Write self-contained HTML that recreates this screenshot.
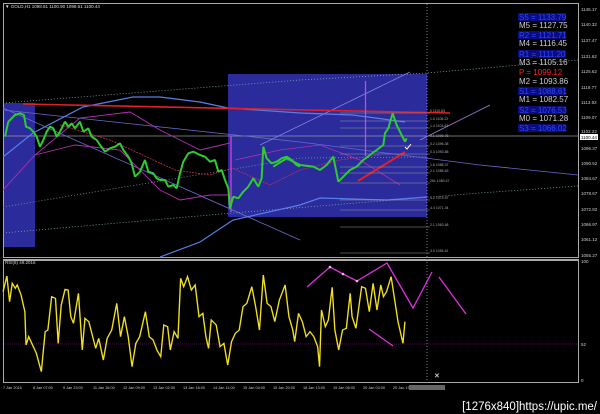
<!DOCTYPE html>
<html><head><meta charset="utf-8"><style>
html,body{margin:0;padding:0;background:#000;width:600px;height:414px;overflow:hidden}
svg{display:block}
text{font-family:"Liberation Sans",sans-serif}
</style></head><body>
<svg width="600" height="414" viewBox="0 0 600 414" xmlns="http://www.w3.org/2000/svg">
<rect width="600" height="414" fill="#000"/>
<rect x="3" y="103" width="32" height="144" fill="#2b2b9c"/>
<rect x="228" y="74" width="199" height="143" fill="#2b2b9c"/>
<rect x="3.5" y="3.5" width="575" height="254" fill="none" stroke="#aaa" stroke-width="1"/>
<line x1="3" y1="259.5" x2="579" y2="259.5" stroke="#aaa"/>
<rect x="3.5" y="260.5" width="575" height="122" fill="none" stroke="#aaa" stroke-width="1"/>
<line x1="427" y1="4" x2="427" y2="383" stroke="#888" stroke-dasharray="1,2"/>
<line x1="4" y1="136" x2="578" y2="136" stroke="#999" stroke-width="0.8"/>
<polyline points="3,103 300,80 427,73 578,60" fill="none" stroke="#7aa" stroke-width="0.8" stroke-dasharray="1,2"/>
<polyline points="3,233 233,213 480,193 578,186" fill="none" stroke="#7aa" stroke-width="0.8" stroke-dasharray="1,2"/>
<polyline points="3,207 300,158 427,157" fill="none" stroke="#88a" stroke-width="0.8" stroke-dasharray="1,2"/>
<line x1="3" y1="108" x2="300" y2="240" stroke="#6a6ad0" stroke-width="0.8"/>
<polyline points="3,110 300,142 480,165 578,175" fill="none" stroke="#6a6ad0" stroke-width="0.8"/>
<line x1="260" y1="145" x2="410" y2="72" stroke="#8080e0" stroke-width="0.8"/>
<line x1="420" y1="140" x2="490" y2="105" stroke="#a080e0" stroke-width="0.8"/>
<polyline points="3,157 33,133 83,107 133,97 160,97 200,102 228,108 300,113 353,115 405,122" fill="none" stroke="#5a7ee8" stroke-width="1.2"/>
<polyline points="160,257 200,242 233,220 300,205 320,198 387,200 427,197" fill="none" stroke="#5a7ee8" stroke-width="1.2"/>
<polyline points="3,190 35,155 80,118 130,112 160,130 200,150 230,143" fill="none" stroke="#b030b0" stroke-width="0.9"/>
<polyline points="35,155 75,145 120,150 160,190 180,200 210,195 230,195" fill="none" stroke="#b030b0" stroke-width="0.9"/>
<polyline points="60,125 110,140 175,170 210,175 232,168 270,185 300,170 340,160 380,155" fill="none" stroke="#c03050" stroke-width="0.8" stroke-dasharray="2,1"/>
<polyline points="235,160 280,150 320,145 360,160 400,185" fill="none" stroke="#b030b0" stroke-width="0.8"/>
<line x1="23" y1="104" x2="450" y2="113" stroke="#e0202a" stroke-width="1.6"/>
<line x1="358" y1="181" x2="405" y2="152" stroke="#e0202a" stroke-width="2"/>
<line x1="231" y1="136" x2="231" y2="212" stroke="#e040e0" stroke-width="1.2"/>
<line x1="365.5" y1="81" x2="365.5" y2="156" stroke="#e040e0" stroke-width="1.2"/>
<g stroke="#999" stroke-width="0.6">
<line x1="340" y1="113" x2="430" y2="113"/><line x1="340" y1="121" x2="430" y2="121"/><line x1="340" y1="128" x2="430" y2="128"/><line x1="340" y1="146" x2="430" y2="146"/><line x1="340" y1="154" x2="430" y2="154"/><line x1="340" y1="167" x2="430" y2="167"/><line x1="340" y1="173" x2="430" y2="173"/><line x1="340" y1="183" x2="430" y2="183"/><line x1="340" y1="200" x2="430" y2="200"/><line x1="340" y1="210" x2="430" y2="210"/><line x1="340" y1="227" x2="430" y2="227"/><line x1="340" y1="253" x2="430" y2="253"/>
</g>
<g fill="#aaa" font-size="3.5">
<text x="430" y="112">0 1110.83</text><text x="430" y="120">1.6 1106.22</text><text x="430" y="127">1.4 1103.63</text><text x="430" y="137">0.1 1099.76</text><text x="430" y="145">0.2 1096.38</text><text x="430" y="153">0.3 1093.88</text><text x="430" y="166">1.6 1088.37</text><text x="430" y="172">2.1 1085.63</text><text x="430" y="182">261 1083.47</text><text x="430" y="199">4.2 1074.97</text><text x="430" y="209">4.4 1071.34</text><text x="430" y="226">2.1 1063.48</text><text x="430" y="252">3.0 1054.61</text>
</g>
<g transform="translate(0,90) scale(0.3333)">
<polyline points="15,140 25,95 45,75 60,70 72,75 78,110 90,115 100,125 110,140 120,170 130,150 140,125 150,110 160,115 170,140 180,125 195,95 205,110 215,100 225,115 240,95 250,125 265,115 275,140 290,150 300,165 315,185 330,175 345,170 360,160 370,180 385,200 395,220 405,260 420,245 435,210 445,245 460,250 470,265 480,270 495,270 505,290 520,285 530,295 540,250 550,215 565,190 580,185 600,195 615,200 630,215 645,210 655,245 665,240 675,270 685,295 690,355 700,320 715,325 730,305 745,290 760,265 775,290 785,265 790,170 800,205 815,220 830,215 845,205 860,200 875,210 890,225 900,230" fill="none" stroke="#2ecc2e" stroke-width="6" stroke-linejoin="bevel"/>
</g>
<g transform="translate(220,70) scale(0.3333)">
<polyline points="160,290 200,265 240,285 280,290 300,300 320,285 340,260 355,335 370,320 390,300 410,290 430,270 450,255 470,240 490,225 495,190 505,175 518,130 530,165 545,195 555,215 560,205" fill="none" stroke="#2ecc2e" stroke-width="6" stroke-linejoin="bevel"/>
</g>
<path d="M405 147 l2 2 l4 -5" stroke="#fff" fill="none" stroke-width="1"/>
<text x="5" y="8" fill="#ddd" font-size="4.5">▼ GOLD,H1  1098.61 1100.90 1098.61 1100.44</text>
<g fill="#0c0c80">
<rect x="518" y="13" width="48" height="8"/><rect x="518" y="31" width="48" height="8"/><rect x="518" y="50" width="48" height="8"/><rect x="518" y="87" width="48" height="8"/><rect x="518" y="106" width="48" height="8"/><rect x="518" y="124" width="48" height="8"/>
</g>
<g font-size="8" font-family="Liberation Sans,sans-serif">
<text x="519" y="20" fill="#2848ff">S5 = 1133.79</text>
<text x="519" y="28" fill="#ccc">M5 = 1127.75</text>
<text x="519" y="38" fill="#2848ff">R2 = 1121.71</text>
<text x="519" y="46" fill="#ccc">M4 = 1116.45</text>
<text x="519" y="57" fill="#2848ff">R1 = 1111.20</text>
<text x="519" y="65" fill="#ccc">M3 = 1105.16</text>
<text x="519" y="75" fill="#ff2020">P  = 1099.12</text>
<text x="519" y="84" fill="#ccc">M2 = 1093.86</text>
<text x="519" y="94" fill="#2848ff">S1 = 1088.61</text>
<text x="519" y="102" fill="#ccc">M1 = 1082.57</text>
<text x="519" y="113" fill="#2848ff">S2 = 1076.53</text>
<text x="519" y="121" fill="#ccc">M0 = 1071.28</text>
<text x="519" y="131" fill="#2848ff">S3 = 1066.02</text>
</g>
<g fill="#ccc" font-size="4.5">
<text x="581" y="11">1145.17</text><text x="581" y="26">1140.32</text><text x="581" y="42">1137.47</text><text x="581" y="58">1131.62</text><text x="581" y="73">1125.62</text><text x="581" y="89">1119.77</text><text x="581" y="104">1113.92</text><text x="581" y="119">1109.07</text><text x="581" y="133">1102.22</text>
<text x="581" y="150">1096.37</text><text x="581" y="165">1090.52</text><text x="581" y="180">1084.67</text><text x="581" y="195">1078.67</text><text x="581" y="211">1072.82</text><text x="581" y="226">1066.97</text><text x="581" y="241">1061.12</text><text x="581" y="257">1055.27</text>
<text x="581" y="263">100</text><text x="581" y="346">52</text><text x="581" y="382">0</text>
</g>
<rect x="580" y="134" width="18" height="6" fill="#fff"/><text x="581" y="139" fill="#000" font-size="4.5">1100.44</text>
<text x="5" y="264" fill="#ccc" font-size="4.5">RSI(8) 49.2016</text>
<line x1="4" y1="344" x2="578" y2="344" stroke="#a020a0" stroke-width="0.6" stroke-dasharray="1,1"/>
<g transform="translate(0,250) scale(0.3827,0.3333)">
<polyline points="8,125 18,78 25,155 32,100 40,115 45,105 55,135 65,185 68,285 75,260 85,285 95,310 108,365 118,245 125,240 135,140 145,145 152,280 160,165 170,118 178,120 185,200 192,220 205,130 215,300 222,205 232,215 240,250 250,295 258,265 270,330 280,265 292,240 305,160 315,260 325,200 335,260 345,350 355,280 365,260 380,185 390,260 400,270 410,300 420,320 428,225 438,230 445,300 455,245 465,265 472,85 480,110 490,80 500,120 510,105 520,200 530,190 538,260 545,295 552,210 565,225 575,290 585,280 595,345 605,275 615,250 625,240 635,170 645,160 658,110 668,170 678,240 688,75 698,160 708,170 718,215 730,150 745,105 755,200 765,240 770,275 780,190 790,215 800,260 810,245 820,260 830,290 835,350 840,180 850,230 858,210 868,112 875,240 885,300 895,240 905,235 915,130 920,200 930,235 945,110 955,115 965,185 975,100 985,180 995,105 1002,140 1010,125 1022,80 1030,140 1040,215 1053,280 1058,215" fill="none" stroke="#f0e020" stroke-width="3.6"/>
</g>
<g stroke="#e030e0" stroke-width="1.3" fill="none">
<polyline points="307,287 330,267 343,274 357,281 387,263 413,308 432,272"/>
<line x1="439" y1="277" x2="466" y2="314"/>
<line x1="369" y1="329" x2="393" y2="346"/>
</g>
<g fill="#e0c0e0"><circle cx="330" cy="267" r="1.3"/><circle cx="343" cy="274" r="1.3"/><circle cx="357" cy="281" r="1.3"/></g>
<text x="434" y="378" fill="#fff" font-size="7">✕</text>
<g fill="#ccc" font-size="3.8">
<text x="3" y="389">7 Jan 2016</text><text x="33" y="389">8 Jan 07:00</text><text x="63" y="389">9 Jan 23:00</text><text x="93" y="389">11 Jan 16:00</text><text x="123" y="389">12 Jan 09:00</text><text x="153" y="389">13 Jan 02:00</text><text x="183" y="389">13 Jan 18:00</text><text x="213" y="389">14 Jan 11:00</text><text x="243" y="389">15 Jan 04:00</text><text x="273" y="389">15 Jan 20:00</text><text x="303" y="389">18 Jan 13:00</text><text x="333" y="389">19 Jan 06:00</text><text x="363" y="389">20 Jan 03:00</text><text x="393" y="389">20 Jan 19</text>
</g>
<rect x="409" y="385" width="36" height="5" fill="#666"/>
<text x="597" y="410" fill="#fff" font-size="11.5" text-anchor="end" font-family="Liberation Mono,monospace">[1276x840]https://upic.me/</text>
</svg>
</body></html>
